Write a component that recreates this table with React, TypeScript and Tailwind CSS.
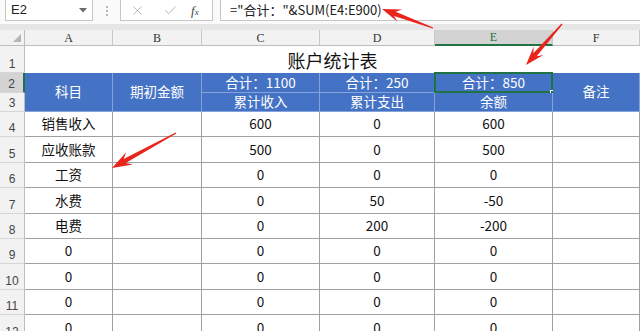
import React from "react";
import { X, Check } from "lucide-react";

const FONT = "font-['Noto_Sans_CJK_SC','Noto_Sans',sans-serif]";

function arrowPoints(
  tx: number,
  ty: number,
  hx: number,
  hy: number,
  w0 = 1.2,
  w1 = 4.5,
  hl = 20,
  hw = 14
) {
  const dx = hx - tx;
  const dy = hy - ty;
  const len = Math.hypot(dx, dy);
  const ux = dx / len;
  const uy = dy / len;
  const nx = -uy;
  const ny = ux;
  const neckX = hx - ux * hl * 0.72;
  const neckY = hy - uy * hl * 0.72;
  const backX = hx - ux * hl;
  const backY = hy - uy * hl;
  const p = (x: number, y: number) => `${x.toFixed(1)},${y.toFixed(1)}`;
  return [
    p(tx + (nx * w0) / 2, ty + (ny * w0) / 2),
    p(neckX + (nx * w1) / 2, neckY + (ny * w1) / 2),
    p(backX + (nx * hw) / 2, backY + (ny * hw) / 2),
    p(hx, hy),
    p(backX - (nx * hw) / 2, backY - (ny * hw) / 2),
    p(neckX - (nx * w1) / 2, neckY - (ny * w1) / 2),
    p(tx - (nx * w0) / 2, ty - (ny * w0) / 2),
  ].join(" ");
}

const RowHdr = ({ n, active }: { n: number; active?: boolean }) => (
  <div
    className={`flex items-end justify-center pb-[2px] text-[12px] leading-none text-[#444] font-['Liberation_Sans',sans-serif] border-b border-[#d6d6d6] ${
      active ? "bg-[#d3d3d3] border-r-2 border-r-[#217346]" : "bg-[#f2f2f2] border-r border-r-[#bdbdbd]"
    }`}
  >
    {n}
  </div>
);

const ColHdr = ({ l, active }: { l: string; active?: boolean }) => (
  <div
    className={`flex items-center justify-center text-[12px] leading-none font-['Liberation_Serif',serif] border-r border-[#c8c8c8] ${
      active ? "bg-[#d3d3d3] border-b-2 border-b-[#217346] text-[#217346]" : "bg-[#f2f2f2] border-b border-b-[#bdbdbd] text-[#333]"
    }`}
  >
    {l}
  </div>
);

const Cell = ({ v }: { v?: string }) => (
  <div className="flex items-center justify-center text-[13.5px] leading-none text-[#111] border-r border-b border-[#a0a0a0] bg-white">
    {v ?? ""}
  </div>
);

const Hdr = ({
  v,
  span,
  selected,
}: {
  v: string;
  span?: boolean;
  selected?: boolean;
}) => (
  <div
    className={`relative flex items-center justify-center text-[13.5px] leading-none text-white bg-[#4472c4] border-r border-b border-[#86a2d8] ${
      span ? "row-span-2" : ""
    }`}
  >
    {v}
    {selected && (
      <>
        <div className="absolute -left-px -top-px -right-px -bottom-px border-2 border-[#217346]" />
        <div className="absolute -right-[4px] -bottom-[4px] w-[6px] h-[6px] bg-[#217346] border border-white" />
      </>
    )}
  </div>
);

const data: [string, string, string, string][] = [
  ["销售收入", "600", "0", "600"],
  ["应收账款", "500", "0", "500"],
  ["工资", "0", "0", "0"],
  ["水费", "0", "50", "-50"],
  ["电费", "0", "200", "-200"],
  ["0", "0", "0", "0"],
  ["0", "0", "0", "0"],
  ["0", "0", "0", "0"],
  ["0", "0", "0", "0"],
];

export default function App() {
  return (
    <div className={`relative w-[640px] h-[331px] overflow-hidden bg-white ${FONT}`}>
      {/* formula bar */}
      <div className="flex h-[24px] bg-[#fafafa]">
        <div className="ml-[5px] w-[88px] h-[22px] -mt-px bg-white border border-[#c6c6c6] flex items-center justify-between pl-[5px] pr-[5px]">
          <span className="text-[13px] text-[#222] font-['Liberation_Sans',sans-serif]">E2</span>
          <svg width="8" height="5" viewBox="0 0 8 5">
            <path d="M0 0 L8 0 L4 4.5 Z" fill="#6a6a6a" />
          </svg>
        </div>
        <div className="w-[27px] flex flex-col items-center justify-center gap-[2px] pb-[2px]">
          <span className="w-[2px] h-[2px] bg-[#b8b8b8]" />
          <span className="w-[2px] h-[2px] bg-[#b8b8b8]" />
          <span className="w-[2px] h-[2px] bg-[#b8b8b8]" />
        </div>
        <div className="w-[93px] h-[22px] -mt-px bg-white border border-[#c6c6c6] flex items-center">
          <X size={15} strokeWidth={1.3} className="ml-[9px] text-[#a9a9a9]" />
          <Check size={15} strokeWidth={1.3} className="ml-[18px] text-[#a9a9a9]" />
          <span className="ml-[13px] text-[13px] italic text-[#444] font-['Liberation_Serif',serif] leading-none">
            f<span className="text-[9px]">x</span>
          </span>
        </div>
        <div className="ml-[7px] flex-1 h-[22px] -mt-px bg-white border border-[#c6c6c6] border-r-0 flex items-center pl-[9px]">
          <span className="text-[13px] text-[#222]">="合计："&amp;SUM(E4:E900)</span>
        </div>
      </div>
      <div className="h-[6px] bg-[#e6e6e6]" />

      {/* sheet grid */}
      <div className="grid grid-cols-[25px_88px_89px_118px_115px_118px_87px] grid-rows-[16px_27px_19.5px_19.5px_repeat(9,25.4px)]">
        <div className="relative bg-[#f2f2f2] border-r border-b border-[#bdbdbd]">
          <svg className="absolute right-[3px] bottom-[3px]" width="8" height="8" viewBox="0 0 8 8">
            <path d="M8 0 L8 8 L0 8 Z" fill="#b5b5b5" />
          </svg>
        </div>
        <ColHdr l="A" />
        <ColHdr l="B" />
        <ColHdr l="C" />
        <ColHdr l="D" />
        <ColHdr l="E" active />
        <ColHdr l="F" />

        <RowHdr n={1} />
        <div className="col-span-6 flex items-center justify-center text-[18px] leading-none text-[#111] bg-white">
          账户统计表
        </div>

        <RowHdr n={2} active />
        <Hdr v="科目" span />
        <Hdr v="期初金额" span />
        <Hdr v="合计：1100" />
        <Hdr v="合计：250" />
        <Hdr v="合计：850" selected />
        <Hdr v="备注" span />

        <RowHdr n={3} />
        <Hdr v="累计收入" />
        <Hdr v="累计支出" />
        <Hdr v="余额" />

        {data.map((r, i) => (
          <React.Fragment key={i}>
            <RowHdr n={i + 4} />
            <Cell v={r[0]} />
            <Cell />
            <Cell v={r[1]} />
            <Cell v={r[2]} />
            <Cell v={r[3]} />
            <Cell />
          </React.Fragment>
        ))}
      </div>

      {/* red annotation arrows */}
      <svg className="absolute inset-0 pointer-events-none" width="640" height="331" viewBox="0 0 640 331">
        <polygon points={arrowPoints(433, 28, 382, 9, 1.2, 4.5, 19, 13)} fill="#e8251c" />
        <polygon points={arrowPoints(562, 24, 526, 65, 1.2, 4.5, 19, 13)} fill="#e8251c" />
        <polygon points={arrowPoints(176, 133, 112, 168, 1.2, 4.5, 20, 14)} fill="#e8251c" />
      </svg>
    </div>
  );
}
